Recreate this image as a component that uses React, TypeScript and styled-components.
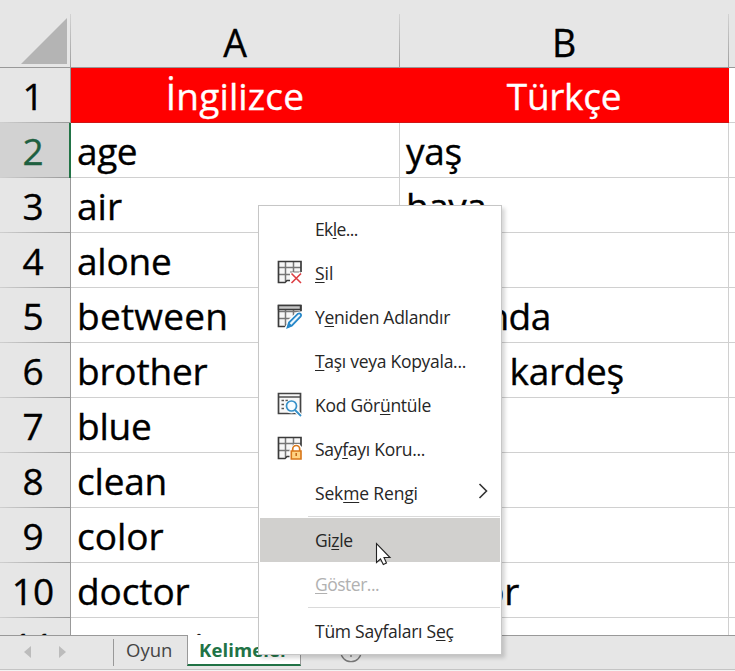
import React from "react";
import styled, { createGlobalStyle } from "styled-components";

const GlobalStyle = createGlobalStyle`
  * { box-sizing: border-box; }
  body { margin: 0; overflow: hidden; background: #e6e6e6; }
`;

const Workbook = styled.main`
  position: relative;
  display: flex;
  flex-direction: column;
  width: 735px;
  height: 671px;
  overflow: hidden;
  background: #f3f3f3;
  font-family: "Open Sans", "Noto Sans", sans-serif;
  color: #000;
`;

const Sheet = styled.div`
  flex: 0 0 635px;
  overflow: hidden;
  background: #fff;
  -webkit-text-stroke: 0.35px currentColor;
`;

const columns = "71px 329px 329px 6px";

const ColumnHeaders = styled.div`
  display: grid;
  grid-template-columns: ${columns};
  height: 68px;
  padding-top: 14px;
  background: #e6e6e6;
  border-bottom: 1px solid #999;
`;

const ColumnHeader = styled.div`
  display: flex;
  justify-content: center;
  font-size: 37.5px;
  line-height: 57px;
  border-right: 1px solid;
  border-image: linear-gradient(#d4d4d4, #999) 1;
`;

const Corner = styled(ColumnHeader)`
  justify-content: flex-end;
  padding: 4px 3px 0 0;
`;

const Row = styled.div`
  display: grid;
  grid-template-columns: ${columns};
  grid-template-rows: 55px;
  height: 55px;
`;

const RowHeader = styled.div<{ $active?: boolean }>`
  display: flex;
  justify-content: center;
  padding-right: ${(p) => (p.$active ? 3 : 4)}px;
  font-size: 37px;
  line-height: 56px;
  color: ${(p) => (p.$active ? "#1f6040" : "#000")};
  background:
    linear-gradient(90deg, #cfcfcf, #999) bottom / 100% 1px no-repeat,
    ${(p) => (p.$active ? "#d2d2d2" : "#e6e6e6")};
  border-right: ${(p) => (p.$active ? "2px solid #217346" : "1px solid #999")};
`;

const Cell = styled.div<{ $heading?: boolean }>`
  padding-left: ${(p) => (p.$heading ? 0 : 6)}px;
  text-align: ${(p) => (p.$heading ? "center" : "left")};
  font-size: 37px;
  line-height: 56px;
  white-space: nowrap;
  color: ${(p) => (p.$heading ? "#fff" : "#000")};
  background: ${(p) => (p.$heading ? "#f00" : "#fff")};
  border-right: 1px solid ${(p) => (p.$heading ? "#f00" : "#d0d0d0")};
  border-bottom: 1px solid ${(p) => (p.$heading ? "#d01515" : "#d0d0d0")};
`;

const Word = styled.span<{ $tracking?: number }>`
  letter-spacing: ${(p) => p.$tracking ?? 0}px;
`;

const Edge = styled.div`
  border-bottom: 1px solid #d0d0d0;
`;

const TabBar = styled.footer`
  display: flex;
  height: 35px;
  background: #e6e6e6;
  border-top: 1px solid #999;
  border-bottom: 1px solid #c4c4c4;
`;

const TabNav = styled.div`
  display: flex;
  align-items: center;
  gap: 28px;
  width: 113px;
  padding: 0 0 2px 24px;
`;

const Tab = styled.div<{ $active?: boolean }>`
  width: ${(p) => (p.$active ? 114 : 74)}px;
  height: ${(p) => (p.$active ? 31 : 27)}px;
  margin-top: ${(p) => (p.$active ? -1 : 3)}px;
  padding-left: ${(p) => (p.$active ? 11 : 12)}px;
  font-size: 18.5px;
  line-height: ${(p) => (p.$active ? 30 : 22)}px;
  font-weight: ${(p) => (p.$active ? 700 : 400)};
  letter-spacing: ${(p) => (p.$active ? 0.1 : 0)}px;
  color: ${(p) => (p.$active ? "#217346" : "#444")};
  background: ${(p) => (p.$active ? "#fff" : "transparent")};
  border-left: 1px solid #999;
  border-right: ${(p) => (p.$active ? "1px solid #999" : "0")};
  border-bottom: ${(p) => (p.$active ? "2px solid #217346" : "0")};
`;

const AddSheet = styled.div`
  margin: 3px 0 0 38px;
`;

const Menu = styled.nav`
  position: absolute;
  left: 258px;
  top: 205px;
  width: 244px;
  height: 450px;
  padding: 1px;
  background: #fff;
  border: 1px solid #c6c6c6;
  box-shadow: 3px 3px 4px rgba(0, 0, 0, 0.16);
`;

const MenuItem = styled.div<{ $hover?: boolean; $disabled?: boolean }>`
  display: grid;
  grid-template-columns: 55px 1fr 22px;
  height: 44px;
  font-size: 17.5px;
  line-height: 44px;
  white-space: nowrap;
  color: ${(p) => (p.$disabled ? "#b1b1b1" : "#262626")};
  background: ${(p) => (p.$hover ? "#d1d0ce" : "transparent")};
`;

const IconSlot = styled.span`
  display: flex;
  padding: 9px 0 0 17px;
`;

const Label = styled.span<{ $tracking?: number }>`
  letter-spacing: ${(p) => p.$tracking ?? -0.28}px;
`;

const AccessKey = styled.span`
  text-decoration: underline;
  text-decoration-thickness: 1px;
  text-underline-offset: 2px;
  text-decoration-skip-ink: none;
`;

const Separator = styled.div<{ $last?: boolean }>`
  height: 1px;
  margin: 1px 0 1px 48px;
  background: #dadada;
`;

const Pointer = styled.svg`
  position: absolute;
  left: 375px;
  top: 542px;
`;

const Grid = ({ band }: { band?: boolean }) => (
  <>
    <path d="M1 1H24V21H10L8 23H1Z" fill="#f7f7f7" />
    <path d="M8.5 1V21M16.5 1V21M1 7.5H24M1 14.5H24" stroke="#777" strokeWidth="1.5" />
    <path d="M24 13V1.5H1.5V22.5H8L10 20.5H14" fill="none" stroke="#3b3b3b" strokeWidth="1.7" />
    {band && <path d="M1.5 1.5H23.5V5.5H1.5Z" fill="#c6c6c6" stroke="#3b3b3b" strokeWidth="1.4" />}
  </>
);

const icons: Record<string, React.ReactNode> = {
  remove: (
    <svg width="26" height="26">
      <Grid />
      <path d="M13 12H26V26H13Z" fill="#fff" />
      <path d="M13 12H24" stroke="#777" />
      <path d="M14.5 13.5L24 23M24 13.5L14.5 23" stroke="#fff" strokeWidth="4" />
      <path d="M14.5 13.5L24 23M24 13.5L14.5 23" stroke="#dd3e43" strokeWidth="1.6" />
    </svg>
  ),
  rename: (
    <svg width="26" height="26">
      <Grid band />
      <path d="M7 25L12 15L20 8L26 7V26Z" fill="#fff" />
      <path d="M10.5 23.5L12 18.5L21 9.7Q22.5 8.9 23.6 10T23.7 12.5L15 21.5Z" fill="#eef7fd" stroke="#2788c9" strokeWidth="1.8" />
      <path d="M10 24L12 18.5L15.5 22Z" fill="#2788c9" />
    </svg>
  ),
  code: (
    <svg width="26" height="26">
      <path d="M1.5 1.5H23.5V21.5H1.5Z" fill="#f8f8f8" stroke="#444" strokeWidth="1.7" />
      <path d="M1 5H24" stroke="#444" strokeWidth="1.4" />
      <path d="M4.5 8.5H7M8.5 8.5H11M4.5 12.5H7M4.5 16.5H7" stroke="#555" strokeWidth="1.4" />
      <circle cx="14.5" cy="14.5" r="7" fill="#f8f8f8" />
      <path d="M18.5 18.5L24 24" stroke="#fff" strokeWidth="4" />
      <circle cx="14.5" cy="14" r="5" fill="#f6fcff" stroke="#3590c9" strokeWidth="1.7" />
      <path d="M18 18L24 24" stroke="#3590c9" strokeWidth="1.8" />
    </svg>
  ),
  protect: (
    <svg width="26" height="26">
      <Grid />
      <path d="M12.5 26V14L17 8H22L26 12V26Z" fill="#fff" />
      <path d="M15.7 15V13A3.5 3.5 0 0 1 22.7 13V15" fill="none" stroke="#d9771a" strokeWidth="1.7" />
      <path d="M14.3 15H24V23H14.3Z" fill="#ffd282" stroke="#d9771a" strokeWidth="1.6" />
      <path d="M19.2 17V20" stroke="#c36516" strokeWidth="1.5" />
    </svg>
  ),
};

type Item = { text: [string, string, string]; icon?: string; tracking?: number; submenu?: boolean; hover?: boolean; disabled?: boolean };

const groups: Item[][] = [
  [
    { text: ["Ek", "l", "e..."], tracking: -0.6 },
    { text: ["", "S", "il"], icon: "remove", tracking: 0 },
    { text: ["Y", "e", "niden Adlandır"], icon: "rename" },
    { text: ["", "T", "aşı veya Kopyala..."] },
    { text: ["Kod Gör", "ü", "ntüle"], icon: "code" },
    { text: ["Say", "f", "ayı Koru..."], icon: "protect" },
    { text: ["Sek", "m", "e Rengi"], submenu: true, tracking: -0.15 },
  ],
  [
    { text: ["Gi", "z", "le"], hover: true, tracking: -0.4 },
    { text: ["", "G", "öster..."], disabled: true, tracking: -0.5 },
  ],
  [{ text: ["Tüm Sayfaları S", "e", "ç"], tracking: -0.25 }],
];

type Entry = [string, string, number?, number?];

const rows: Entry[] = [
  ["İngilizce", "Türkçe", 0.15, -0.3],
  ["age", "yaş", -0.4, -0.3],
  ["air", "hava", 0, -0.5],
  ["alone", "yalnız", -0.2, -1],
  ["between", "arasında", 0.25, -0.55],
  ["brother", "erkek kardeş", -0.2, -0.28],
  ["blue", "mavi", -0.2],
  ["clean", "temiz", -0.2],
  ["color", "renk"],
  ["doctor", "doktor", -0.1, -0.3],
  ["expensive", "pahalı", -1.1],
];

export default function App() {
  return (
    <>
      <GlobalStyle />
      <Workbook>
        <Sheet>
          <ColumnHeaders>
            <Corner>
              <svg width="46" height="46"><path d="M46 0V46H0Z" fill="#b4b4b4" /></svg>
            </Corner>
            <ColumnHeader>A</ColumnHeader>
            <ColumnHeader>B</ColumnHeader>
          </ColumnHeaders>
          {rows.map(([a, b, ta, tb], i) => (
            <Row key={a}>
              <RowHeader $active={i === 1}>{i + 1}</RowHeader>
              <Cell $heading={i === 0}><Word $tracking={ta}>{a}</Word></Cell>
              <Cell $heading={i === 0}><Word $tracking={tb}>{b}</Word></Cell>
              <Edge />
            </Row>
          ))}
        </Sheet>
        <TabBar>
          <TabNav>
            <svg width="7" height="12"><path d="M7 0V12L0 6Z" fill="#bcbcbc" /></svg>
            <svg width="7" height="12"><path d="M0 0V12L7 6Z" fill="#bcbcbc" /></svg>
          </TabNav>
          <Tab>Oyun</Tab>
          <Tab $active>Kelimeler</Tab>
          <AddSheet>
            <svg width="24" height="24" fill="none" stroke="#777" strokeWidth="1.3">
              <circle cx="12" cy="12.5" r="10.2" />
              <path d="M12 7V18M6.5 12.5H17.5" />
            </svg>
          </AddSheet>
        </TabBar>
        <Menu>
          {groups.map((group, g) => (
            <React.Fragment key={g}>
              {g > 0 && <Separator />}
              {group.map((item) => (
                <MenuItem key={item.text.join("")} $hover={item.hover} $disabled={item.disabled}>
                  <IconSlot>{item.icon && icons[item.icon]}</IconSlot>
                  <Label $tracking={item.tracking}>
                    {item.text[0]}<AccessKey>{item.text[1]}</AccessKey>{item.text[2]}
                  </Label>
                  {item.submenu && (
                    <svg width="12" height="44"><path d="M1.5 13L8.5 20L1.5 27" fill="none" stroke="#333" strokeWidth="1.6" /></svg>
                  )}
                </MenuItem>
              ))}
            </React.Fragment>
          ))}
        </Menu>
        <Pointer width="18" height="24">
          <path d="M1.5 1.5V20.5L5.5 17L8.3 22.5L11.5 21L9 15.5H15Z" fill="#fff" stroke="#222" strokeWidth="1.1" />
        </Pointer>
      </Workbook>
    </>
  );
}
